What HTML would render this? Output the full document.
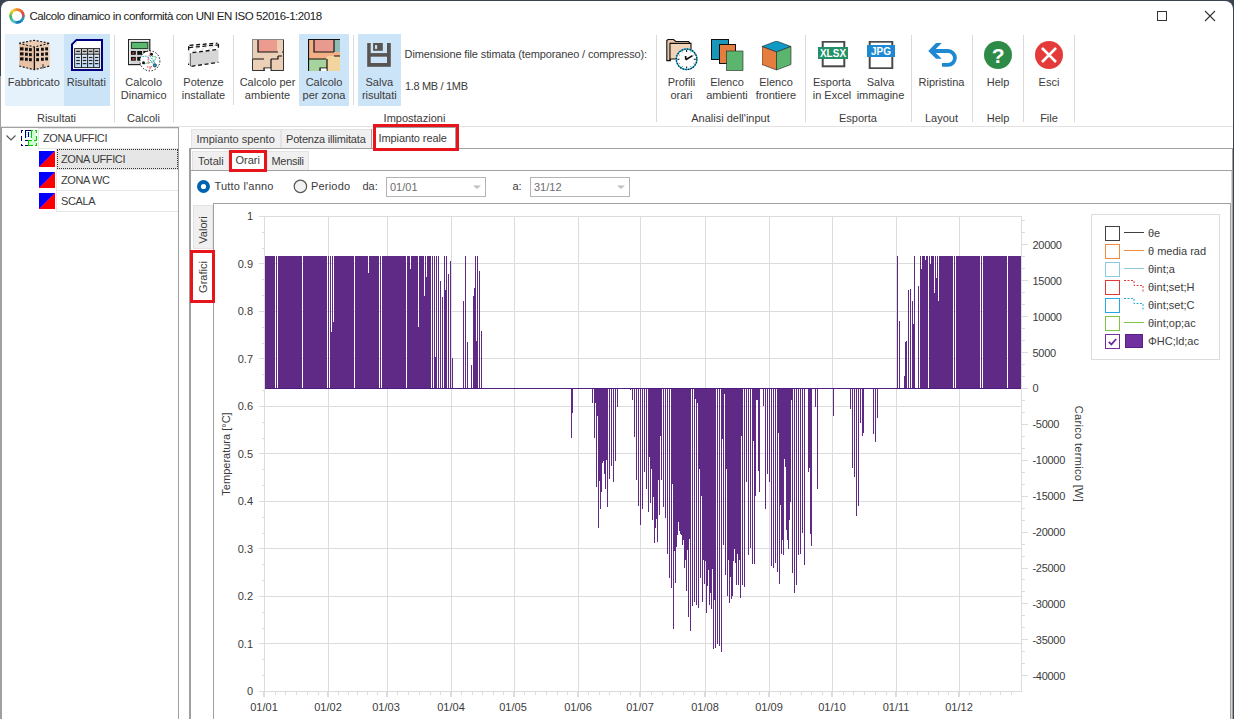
<!DOCTYPE html>
<html><head><meta charset="utf-8"><style>
html,body{margin:0;padding:0;width:1234px;height:719px;overflow:hidden;background:#3a4350;}
.a{position:absolute;}
.t{position:absolute;white-space:nowrap;line-height:1;font-family:"Liberation Sans", sans-serif;}
</style></head><body>
<div class="a" style="left:0px;top:0px;width:1234px;height:719px;background:#3a4350;"></div><div class="a" style="left:1px;top:1px;width:1232px;height:730px;background:#fff;border-radius:8px 8px 0 0;"></div><div class="a" style="left:0px;top:76px;width:1px;height:643px;background:#a0a0a0;"></div><div class="a" style="left:9px;top:8px;width:16px;height:16px;border-radius:50%;background:conic-gradient(from 0deg, #f08a2c 0deg, #e8453c 70deg, #1aa0c8 120deg, #0b6fb0 170deg, #5cc3d8 210deg, #3ab36b 260deg, #f5d22c 320deg, #f08a2c 360deg);-webkit-mask:radial-gradient(circle, transparent 4.5px, #000 5.5px);"></div><div class="t" style="left:29.5px;top:11px;font-size:11.5px;color:#1a1a1a;letter-spacing:-0.44px;">Calcolo dinamico in conformità con UNI EN ISO 52016-1:2018</div><div class="a" style="left:1157px;top:11px;width:10px;height:10px;box-sizing:border-box;border:1px solid #333;"></div><svg class="a" style="left:1204px;top:10px;" width="12" height="12" viewBox="0 0 12 12"><path d="M1 1L11 11M11 1L1 11" stroke="#333" stroke-width="1.1"/></svg><div class="a" style="left:5px;top:34px;width:59px;height:72px;background:#e5f1fb;"></div><div class="a" style="left:64px;top:34px;width:46px;height:72px;background:#cce4f7;"></div><div class="a" style="left:299px;top:34px;width:50px;height:72px;background:#cce4f7;"></div><div class="a" style="left:358px;top:34px;width:43px;height:72px;background:#cce4f7;"></div><div class="a" style="left:114px;top:35px;width:1px;height:87px;background:#dadada;"></div><div class="a" style="left:173px;top:35px;width:1px;height:87px;background:#dadada;"></div><div class="a" style="left:656px;top:35px;width:1px;height:87px;background:#dadada;"></div><div class="a" style="left:805px;top:35px;width:1px;height:87px;background:#dadada;"></div><div class="a" style="left:911px;top:35px;width:1px;height:87px;background:#dadada;"></div><div class="a" style="left:972px;top:35px;width:1px;height:87px;background:#dadada;"></div><div class="a" style="left:1023px;top:35px;width:1px;height:87px;background:#dadada;"></div><div class="a" style="left:1074px;top:35px;width:1px;height:87px;background:#dadada;"></div><div class="a" style="left:233px;top:35px;width:1px;height:70px;background:#dadada;"></div><div class="a" style="left:353px;top:35px;width:1px;height:70px;background:#dadada;"></div><div class="a" style="left:1px;top:126px;width:1232px;height:1px;background:#e3e3e3;"></div><div class="t" style="left:-26.200000000000003px;top:77px;width:120px;text-align:center;font-size:11px;color:#3b3b3b;">Fabbricato</div><div class="t" style="left:26.299999999999997px;top:77px;width:120px;text-align:center;font-size:11px;color:#3b3b3b;">Risultati</div><div class="t" style="left:83.69999999999999px;top:77px;width:120px;text-align:center;font-size:11px;color:#3b3b3b;">Calcolo</div><div class="t" style="left:83.69999999999999px;top:90px;width:120px;text-align:center;font-size:11px;color:#3b3b3b;">Dinamico</div><div class="t" style="left:143.5px;top:77px;width:120px;text-align:center;font-size:11px;color:#3b3b3b;">Potenze</div><div class="t" style="left:143.5px;top:90px;width:120px;text-align:center;font-size:11px;color:#3b3b3b;">installate</div><div class="t" style="left:207.5px;top:77px;width:120px;text-align:center;font-size:11px;color:#3b3b3b;">Calcolo per</div><div class="t" style="left:207.5px;top:90px;width:120px;text-align:center;font-size:11px;color:#3b3b3b;">ambiente</div><div class="t" style="left:264.0px;top:77px;width:120px;text-align:center;font-size:11px;color:#3b3b3b;">Calcolo</div><div class="t" style="left:264.0px;top:90px;width:120px;text-align:center;font-size:11px;color:#3b3b3b;">per zona</div><div class="t" style="left:319.3px;top:77px;width:120px;text-align:center;font-size:11px;color:#3b3b3b;">Salva</div><div class="t" style="left:319.3px;top:90px;width:120px;text-align:center;font-size:11px;color:#3b3b3b;">risultati</div><div class="t" style="left:404.6px;top:49px;font-size:11px;color:#3b3b3b;letter-spacing:-0.13px;">Dimensione file stimata (temporaneo / compresso):</div><div class="t" style="left:405px;top:81px;font-size:11px;color:#3b3b3b;letter-spacing:-0.33px;">1.8 MB / 1MB</div><div class="t" style="left:621.5px;top:77px;width:120px;text-align:center;font-size:11px;color:#3b3b3b;">Profili</div><div class="t" style="left:621.5px;top:90px;width:120px;text-align:center;font-size:11px;color:#3b3b3b;">orari</div><div class="t" style="left:667.0px;top:77px;width:120px;text-align:center;font-size:11px;color:#3b3b3b;">Elenco</div><div class="t" style="left:667.0px;top:90px;width:120px;text-align:center;font-size:11px;color:#3b3b3b;">ambienti</div><div class="t" style="left:716.0px;top:77px;width:120px;text-align:center;font-size:11px;color:#3b3b3b;">Elenco</div><div class="t" style="left:716.0px;top:90px;width:120px;text-align:center;font-size:11px;color:#3b3b3b;">frontiere</div><div class="t" style="left:772.0px;top:77px;width:120px;text-align:center;font-size:11px;color:#3b3b3b;">Esporta</div><div class="t" style="left:772.0px;top:90px;width:120px;text-align:center;font-size:11px;color:#3b3b3b;">in Excel</div><div class="t" style="left:820.5px;top:77px;width:120px;text-align:center;font-size:11px;color:#3b3b3b;">Salva</div><div class="t" style="left:820.5px;top:90px;width:120px;text-align:center;font-size:11px;color:#3b3b3b;">immagine</div><div class="t" style="left:881.5px;top:77px;width:120px;text-align:center;font-size:11px;color:#3b3b3b;">Ripristina</div><div class="t" style="left:938.0px;top:77px;width:120px;text-align:center;font-size:11px;color:#3b3b3b;">Help</div><div class="t" style="left:989.0px;top:77px;width:120px;text-align:center;font-size:11px;color:#3b3b3b;">Esci</div><div class="t" style="left:-23.5px;top:113px;width:160px;text-align:center;font-size:11px;color:#3b3b3b;">Risultati</div><div class="t" style="left:63.5px;top:113px;width:160px;text-align:center;font-size:11px;color:#3b3b3b;">Calcoli</div><div class="t" style="left:334.5px;top:113px;width:160px;text-align:center;font-size:11px;color:#3b3b3b;">Impostazioni</div><div class="t" style="left:650.5px;top:113px;width:160px;text-align:center;font-size:11px;color:#3b3b3b;">Analisi dell'input</div><div class="t" style="left:778.0px;top:113px;width:160px;text-align:center;font-size:11px;color:#3b3b3b;">Esporta</div><div class="t" style="left:861.5px;top:113px;width:160px;text-align:center;font-size:11px;color:#3b3b3b;">Layout</div><div class="t" style="left:918.0px;top:113px;width:160px;text-align:center;font-size:11px;color:#3b3b3b;">Help</div><div class="t" style="left:969.0px;top:113px;width:160px;text-align:center;font-size:11px;color:#3b3b3b;">File</div><svg class="a" style="left:19px;top:39px;" width="32" height="32" viewBox="0 0 32 32"><path d="M0 4.25L15 1.25L30.5 4.25L30.75 27L15.25 30.75L0.25 27Z" fill="#eccdb4"/><path d="M0 4.25L15.25 8L15.25 30.75L0.25 27Z" fill="#e6c1a5"/><path d="M0 4.25L15 1.25L30.5 4.25M0 4.25L15.25 8L30.5 4.25M0.25 27L15.25 30.75L30.75 27" fill="none" stroke="#111" stroke-width="1.1" stroke-dasharray="2 1.6"/><path d="M15.4 8L15.4 30.5" stroke="#111" stroke-width="1.3"/><rect x="1" y="8.3" width="3.5" height="3.1" fill="#111"/><rect x="1" y="13.3" width="3.5" height="3.1" fill="#111"/><rect x="1" y="18.3" width="3.5" height="3.1" fill="#111"/><rect x="6" y="8.700000000000001" width="2.8" height="3.1" fill="#111"/><rect x="6" y="13.700000000000001" width="2.8" height="3.1" fill="#111"/><rect x="6" y="18.7" width="2.8" height="3.1" fill="#111"/><rect x="10" y="9.100000000000001" width="2.8" height="3.1" fill="#111"/><rect x="10" y="14.100000000000001" width="2.8" height="3.1" fill="#111"/><rect x="10" y="19.1" width="2.8" height="3.1" fill="#111"/><rect x="17.2" y="9.100000000000001" width="2.8" height="3.1" fill="#111"/><rect x="17.2" y="14.100000000000001" width="2.8" height="3.1" fill="#111"/><rect x="17.2" y="19.1" width="2.8" height="3.1" fill="#111"/><rect x="22" y="8.700000000000001" width="2.8" height="3.1" fill="#111"/><rect x="22" y="13.700000000000001" width="2.8" height="3.1" fill="#111"/><rect x="22" y="18.700000000000003" width="2.8" height="3.1" fill="#111"/><rect x="26.2" y="8.3" width="2.8" height="3.1" fill="#111"/><rect x="26.2" y="13.3" width="2.8" height="3.1" fill="#111"/><rect x="26.2" y="18.3" width="2.8" height="3.1" fill="#111"/><rect x="23.5" y="25" width="1" height="4.5" fill="#333"/></svg><svg class="a" style="left:71px;top:39px;" width="32" height="32" viewBox="0 0 32 32"><defs><linearGradient id="rg" x1="0" y1="0" x2="0" y2="1"><stop offset="0" stop-color="#f4f9ff"/><stop offset="1" stop-color="#b8d8f8"/></linearGradient></defs><path d="M5.5 1H31V31H1V5.5Z" fill="#fff" stroke="#000080" stroke-width="2"/><path d="M2 5.8L5.8 2V5.8Z" fill="#e8e8e8"/><rect x="3.6" y="9.6" width="25" height="19" fill="url(#rg)" stroke="#222" stroke-width="1"/><rect x="4.1" y="10.1" width="24" height="4.8" fill="#c8c8c8"/><path d="M3.6 15.2H28.6M10.5 9.6V28.6M16.6 9.6V28.6M22.7 9.6V28.6" stroke="#222" stroke-width="1"/><rect x="5.25" y="11.8" width="3.6" height="1.2" fill="#222"/><rect x="5.25" y="17.9" width="3.6" height="1.2" fill="#222"/><rect x="5.25" y="20.9" width="3.6" height="1.2" fill="#222"/><rect x="5.25" y="24.0" width="3.6" height="1.2" fill="#222"/><rect x="11.75" y="11.8" width="3.6" height="1.2" fill="#222"/><rect x="11.75" y="17.9" width="3.6" height="1.2" fill="#222"/><rect x="11.75" y="20.9" width="3.6" height="1.2" fill="#222"/><rect x="11.75" y="24.0" width="3.6" height="1.2" fill="#222"/><rect x="17.85" y="11.8" width="3.6" height="1.2" fill="#222"/><rect x="17.85" y="17.9" width="3.6" height="1.2" fill="#222"/><rect x="17.85" y="20.9" width="3.6" height="1.2" fill="#222"/><rect x="17.85" y="24.0" width="3.6" height="1.2" fill="#222"/><rect x="23.85" y="11.8" width="3.6" height="1.2" fill="#222"/><rect x="23.85" y="17.9" width="3.6" height="1.2" fill="#222"/><rect x="23.85" y="20.9" width="3.6" height="1.2" fill="#222"/><rect x="23.85" y="24.0" width="3.6" height="1.2" fill="#222"/></svg><svg class="a" style="left:128px;top:39px;" width="33" height="33" viewBox="0 0 33 33"><rect x="0.6" y="0.4" width="21.2" height="25.2" fill="#d4d4d4" stroke="#222" stroke-width="1.2"/><path d="M1.6 25V1.4H21" fill="none" stroke="#f0f0f0" stroke-width="1"/><rect x="3.5" y="3.5" width="16.3" height="6" fill="#5cb870" stroke="#1d4d2a" stroke-width="1"/><rect x="3" y="12" width="4.8" height="3.8" fill="#111"/><rect x="9.2" y="12" width="4.8" height="3.8" fill="#111"/><rect x="15.3" y="12" width="4.8" height="3.8" fill="#111"/><rect x="3" y="17.9" width="4.8" height="3.8" fill="#111"/><rect x="9.2" y="17.9" width="4.8" height="3.8" fill="#111"/><rect x="4.6" y="13.3" width="1.6" height="1.4" fill="#f44"/><rect x="4.6" y="19.2" width="1.8" height="1.6" fill="#f44"/><rect x="17" y="13" width="1.6" height="1.4" fill="#f44"/><circle cx="21.9" cy="21.9" r="10" fill="#fff"/><circle cx="21.9" cy="21.9" r="10" fill="none" stroke="#111" stroke-width="1" stroke-dasharray="1.5 1.6"/><path d="M14.5 17.5L18.5 17L26 25.5L27 26.5M22 17L25 21L28 26" fill="none" stroke="#1aa0c8" stroke-width="1" stroke-dasharray="1.5 0.8"/><path d="M24 17.5L28.5 18L26 22.5L16 25L15.5 23.7" fill="none" stroke="#3ab36b" stroke-width="1" stroke-dasharray="1.5 0.8"/><path d="M22.5 13.5L20 19L20.5 25M23.5 27L21.5 30.5M19 28L24 28" fill="none" stroke="#ee4444" stroke-width="1" stroke-dasharray="1.5 0.8"/><circle cx="23.5" cy="15.3" r="1.5" fill="#111"/><circle cx="15.5" cy="23.7" r="1.5" fill="#111"/><circle cx="26.9" cy="26.4" r="1.6" fill="#1aa0c8" stroke="#111" stroke-width="0.6"/></svg><svg class="a" style="left:188px;top:42px;" width="32" height="26" viewBox="0 0 32 26"><path d="M0.3 4.5L2.3 11L2.3 24.3L0.3 22.3Z" fill="#ebebeb"/><path d="M2.3 11L30.5 7.4L30.5 20.3L2.3 24.3Z" fill="#d6d6d6"/><path d="M0.3 4.5L1.5 3.3L29.5 1.2L30.5 2.2L30.5 7.4L2.3 11Z" fill="#fff"/><path d="M4 10L12 4.5M12 9L20 3.5M20 8L28 2.5" stroke="#d0d0d0" stroke-width="0.8"/><path d="M1.5 3.3L29.5 1.2M1.2 5.6L30.4 2.8M4.5 10.6L30.5 7.4M3.5 24.3L30.5 20.3M30.4 1.8V7.8M0.6 4.2V9.5" fill="none" stroke="#111" stroke-width="1.3" stroke-dasharray="4 2.6"/><path d="M2.4 11.2V24.3" stroke="#444" stroke-width="0.8"/><circle cx="0.6" cy="22.3" r="0.7" fill="#111"/></svg><svg class="a" style="left:252px;top:39px;" width="32" height="32" viewBox="0 0 32 32"><rect x="0.5" y="0.5" width="31" height="31" fill="#ebcfb7" stroke="#888" stroke-width="1"/><rect x="6" y="1" width="19" height="12" fill="#eb9c8f"/><path d="M6 1L6 13L26 13M30 13L32 13M26 17L30 17M1 20L12 20M19 20L26 20L26 17M19 20L19 31M12 31L12 29L19 29" fill="none" stroke="#111" stroke-width="1.2"/><path d="M0.5 31.5L31.5 31.5M31.5 1L31.5 31.5M0.5 20L0.5 31.5" stroke="#333" stroke-width="1"/><rect x="13" y="29.5" width="5.5" height="2.5" fill="#fff"/></svg><svg class="a" style="left:308px;top:39px;" width="32" height="32" viewBox="0 0 32 32"><rect x="0" y="0" width="32" height="32" fill="#f2b084"/><rect x="6" y="1" width="19" height="12" fill="#e99a8e"/><rect x="26" y="1" width="6" height="12" fill="#8fbcb5"/><rect x="1" y="20" width="17" height="12" fill="#a6d39e"/><rect x="19" y="17" width="13" height="15" fill="#f2d59e"/><path d="M0.5 32L0.5 0.5L32 0.5M6 1L6 13L26 13M26 1L26 13M1 20L18 20M19 20L19 32M12 32L12 29L19 29M26 17L32 17" fill="none" stroke="#111" stroke-width="1.2"/><rect x="13" y="29.5" width="5.5" height="2.5" fill="#fff"/></svg><svg class="a" style="left:367px;top:43px;" width="24" height="24" viewBox="0 0 24 24"><rect x="0.2" y="0" width="23.6" height="23.8" fill="#575451"/><rect x="3.7" y="0" width="16.3" height="10.1" fill="#cce4f7"/><rect x="6.1" y="0" width="9.7" height="7.8" fill="#575451"/><rect x="8" y="2.1" width="2.1" height="3.8" fill="#cce4f7"/><rect x="3.7" y="13.7" width="16.3" height="6.3" fill="#cce4f7"/></svg><svg class="a" style="left:666px;top:39px;" width="32" height="32" viewBox="0 0 32 32"><path d="M0.8 21.6V1.5L2 0.5H7.5L9.8 2.5H22.5L23.5 3.5V8H4.4V21.6Z" fill="#e8c4a8" stroke="#111" stroke-width="1.1"/><path d="M4 21.6V4.4H25V20H4Z" fill="#f0d2b8" stroke="#111" stroke-width="1.1"/><circle cx="20.6" cy="20.3" r="10.3" fill="#fff" stroke="#1ab0d8" stroke-width="1.4"/><circle cx="20.6" cy="20.3" r="10.3" fill="none" stroke="#111" stroke-width="1.2" stroke-dasharray="1.2 1.5"/><path d="M20.60 13.10L20.60 11.00" stroke="#222" stroke-width="1.1"/><path d="M24.70 13.20L25.10 12.51" stroke="#222" stroke-width="0.9"/><path d="M27.70 16.20L28.39 15.80" stroke="#222" stroke-width="0.9"/><path d="M27.80 20.30L29.90 20.30" stroke="#222" stroke-width="1.1"/><path d="M27.70 24.40L28.39 24.80" stroke="#222" stroke-width="0.9"/><path d="M24.70 27.40L25.10 28.09" stroke="#222" stroke-width="0.9"/><path d="M20.60 27.50L20.60 29.60" stroke="#222" stroke-width="1.1"/><path d="M16.50 27.40L16.10 28.09" stroke="#222" stroke-width="0.9"/><path d="M13.50 24.40L12.81 24.80" stroke="#222" stroke-width="0.9"/><path d="M13.40 20.30L11.30 20.30" stroke="#222" stroke-width="1.1"/><path d="M13.50 16.20L12.81 15.80" stroke="#222" stroke-width="0.9"/><path d="M16.50 13.20L16.10 12.51" stroke="#222" stroke-width="0.9"/><path d="M19.8 20.8L26.5 16.6M19.8 20.8L19.6 17" stroke="#111" stroke-width="1.7"/></svg><svg class="a" style="left:711px;top:39px;" width="33" height="32" viewBox="0 0 33 32"><rect x="0.5" y="0.5" width="17" height="20" fill="#1a97b8" stroke="#111" stroke-width="1"/><rect x="8.5" y="5.5" width="16" height="19" fill="#e57d3f" stroke="#111" stroke-width="1"/><rect x="15.5" y="12" width="16.5" height="19.5" fill="#5bb56f" stroke="#222" stroke-width="0.6"/></svg><svg class="a" style="left:762px;top:41px;" width="30" height="30" viewBox="0 0 30 30"><path d="M14.5 0L29 5.5L14.5 11L0 5.5Z" fill="#0e9ac5" stroke="#222" stroke-width="0.6"/><path d="M0 5.5L14.5 11L14.5 29L0 23.5Z" fill="#e57d3f" stroke="#222" stroke-width="0.6"/><path d="M29 5.5L14.5 11L14.5 29L29 23.5Z" fill="#5bb56f" stroke="#222" stroke-width="0.6"/></svg><svg class="a" style="left:818px;top:41px;" width="30" height="27" viewBox="0 0 30 27"><rect x="4.7" y="0.7" width="21.6" height="24.6" fill="#fff" stroke="#4a4a4a" stroke-width="2"/><rect x="0" y="6" width="30" height="12" fill="#24906a"/><text x="15" y="16" text-anchor="middle" font-family="Liberation Sans" font-weight="bold" font-size="10" fill="#fff">XLSX</text></svg><svg class="a" style="left:867px;top:41px;" width="28" height="28" viewBox="0 0 28 28"><rect x="2.7" y="0.7" width="22.6" height="26.6" fill="#fff" stroke="#4a4a4a" stroke-width="2"/><rect x="0" y="4" width="28" height="12" fill="#1e88d2"/><text x="14" y="14" text-anchor="middle" font-family="Liberation Sans" font-weight="bold" font-size="10" fill="#fff">JPG</text></svg><svg class="a" style="left:928px;top:43px;" width="30" height="25" viewBox="0 0 30 25"><path d="M0.25 8L8 0L13.75 0L5.8 8L13.75 15.75L8 15.75Z" fill="#1e88d2"/><path d="M5 6.1H20A8.825 8.825 0 0 1 20 23.75H14V20H20A5.05 5.05 0 0 0 20 9.9H5Z" fill="#1e88d2"/></svg><svg class="a" style="left:983px;top:40px;" width="30" height="30" viewBox="0 0 30 30"><circle cx="15" cy="15" r="14" fill="#2e8b47"/><text x="15.2" y="23" text-anchor="middle" font-family="Liberation Sans" font-weight="bold" font-size="21" fill="#fff">?</text></svg><svg class="a" style="left:1034px;top:40px;" width="30" height="30" viewBox="0 0 30 30"><circle cx="15" cy="15" r="14" fill="#e53a3a"/><path d="M8 8L22 22M22 8L8 22" stroke="#fff" stroke-width="2.6"/></svg><div class="a" style="left:1px;top:127px;width:178px;height:600px;background:#fff;box-sizing:border-box;border:1px solid #a0a0a0;"></div><svg class="a" style="left:5px;top:134px;" width="12" height="9" viewBox="0 0 12 9"><path d="M1.5 1.5L6 6L10.5 1.5" fill="none" stroke="#555" stroke-width="1.2"/></svg><svg class="a" style="left:21px;top:130px;" width="16" height="16" viewBox="0 0 16 16"><g shape-rendering="crispEdges"><rect x="11" y="1" width="4" height="9" fill="#ccffcc"/><rect x="8" y="11" width="7" height="4" fill="#ccffcc"/><rect x="5" y="2" width="5" height="1" fill="#c0dcff"/><rect x="5" y="4" width="5" height="1" fill="#c0dcff"/><rect x="5" y="6" width="5" height="1" fill="#c0dcff"/><rect x="0" y="0" width="2" height="1" fill="#000066"/><rect x="0" y="0" width="1" height="3" fill="#000066"/><rect x="0" y="6" width="1" height="5" fill="#000066"/><rect x="0" y="14" width="1" height="2" fill="#000066"/><rect x="0" y="15" width="2" height="1" fill="#000066"/><rect x="4" y="15" width="3" height="1" fill="#000066"/><rect x="4" y="0" width="6" height="1" fill="#000066"/><rect x="4" y="0" width="1" height="8" fill="#000066"/><rect x="7" y="2" width="1" height="5" fill="#000066"/><rect x="4" y="10" width="3" height="1" fill="#000066"/><rect x="10" y="0" width="1" height="8" fill="#00cc00"/><rect x="10" y="0" width="2" height="1" fill="#00cc00"/><rect x="14" y="0" width="2" height="1" fill="#00cc00"/><rect x="15" y="0" width="1" height="3" fill="#00cc00"/><rect x="15" y="6" width="1" height="5" fill="#00cc00"/><rect x="15" y="13" width="1" height="3" fill="#00cc00"/><rect x="7" y="10" width="4" height="1" fill="#00cc00"/><rect x="13" y="10" width="3" height="1" fill="#00cc00"/><rect x="7" y="10" width="1" height="6" fill="#00cc00"/><rect x="7" y="15" width="5" height="1" fill="#00cc00"/><rect x="14" y="15" width="2" height="1" fill="#00cc00"/></g></svg><div class="a" style="left:38px;top:128px;width:140px;height:1px;background:#e6e6e6;"></div><div class="a" style="left:38px;top:128px;width:1px;height:20px;background:#e6e6e6;"></div><div class="a" style="left:38px;top:148px;width:140px;height:1px;background:#e6e6e6;"></div><div class="t" style="left:43px;top:133px;font-size:11px;color:#3b3b3b;letter-spacing:-0.4px;">ZONA UFFICI</div><svg class="a" style="left:39px;top:151px;" width="16" height="16" viewBox="0 0 16 16"><rect x="0" y="0" width="16" height="16" fill="#ff0000"/><path d="M0 0L16 0L0 16Z" fill="#0000ff"/><path d="M0 16L16 0" stroke="#c000c0" stroke-width="0.8"/></svg><div class="a" style="left:56px;top:149px;width:1px;height:21px;background:#e6e6e6;"></div><div class="a" style="left:56px;top:169px;width:122px;height:1px;background:#e6e6e6;"></div><div class="a" style="left:57px;top:149px;width:121px;height:20px;background:#e6e6e6;box-sizing:border-box;border:1px dotted #333;"></div><div class="t" style="left:61px;top:154px;font-size:11px;color:#3b3b3b;letter-spacing:-0.4px;">ZONA UFFICI</div><svg class="a" style="left:39px;top:172px;" width="16" height="16" viewBox="0 0 16 16"><rect x="0" y="0" width="16" height="16" fill="#ff0000"/><path d="M0 0L16 0L0 16Z" fill="#0000ff"/><path d="M0 16L16 0" stroke="#c000c0" stroke-width="0.8"/></svg><div class="a" style="left:56px;top:170px;width:1px;height:21px;background:#e6e6e6;"></div><div class="a" style="left:56px;top:190px;width:122px;height:1px;background:#e6e6e6;"></div><div class="t" style="left:61px;top:175px;font-size:11px;color:#3b3b3b;letter-spacing:-0.4px;">ZONA WC</div><svg class="a" style="left:39px;top:193px;" width="16" height="16" viewBox="0 0 16 16"><rect x="0" y="0" width="16" height="16" fill="#ff0000"/><path d="M0 0L16 0L0 16Z" fill="#0000ff"/><path d="M0 16L16 0" stroke="#c000c0" stroke-width="0.8"/></svg><div class="a" style="left:56px;top:191px;width:1px;height:21px;background:#e6e6e6;"></div><div class="a" style="left:56px;top:211px;width:122px;height:1px;background:#e6e6e6;"></div><div class="t" style="left:61px;top:196px;font-size:11px;color:#3b3b3b;letter-spacing:-0.4px;">SCALA</div><div class="a" style="left:371px;top:148px;width:862px;height:1px;background:#a0a0a0;"></div><div class="a" style="left:191px;top:129px;width:90px;height:20px;background:#f0f0f0;box-sizing:border-box;border:1px solid #e3e3e3;"></div><div class="t" style="left:196.5px;top:134px;font-size:11px;color:#3b3b3b;letter-spacing:0px;">Impianto spento</div><div class="a" style="left:281px;top:129px;width:91px;height:20px;background:#f0f0f0;box-sizing:border-box;border:1px solid #e3e3e3;"></div><div class="t" style="left:286px;top:134px;font-size:11px;color:#3b3b3b;letter-spacing:-0.2px;">Potenza illimitata</div><div class="a" style="left:372px;top:127px;width:86px;height:23px;background:#fff;"></div><div class="a" style="left:375px;top:127px;width:81px;height:23px;box-sizing:border-box;border:1px solid #a0a0a0;border-bottom:none;"></div><div class="a" style="left:371px;top:129px;width:1px;height:20px;background:#a0a0a0;"></div><div class="t" style="left:378.5px;top:133px;font-size:11px;color:#3b3b3b;letter-spacing:-0.1px;">Impianto reale</div><div class="a" style="left:189px;top:148px;width:1044px;height:600px;background:#fff;box-sizing:border-box;border:1px solid #a0a0a0;"></div><div class="a" style="left:189px;top:148px;width:2px;height:600px;background:#a0a0a0;"></div><div class="a" style="left:192px;top:151px;width:37px;height:20px;background:#f0f0f0;box-sizing:border-box;border:1px solid #e3e3e3;"></div><div class="t" style="left:198px;top:156px;font-size:11px;color:#3b3b3b;">Totali</div><div class="a" style="left:267px;top:151px;width:42px;height:20px;background:#f0f0f0;box-sizing:border-box;border:1px solid #e3e3e3;"></div><div class="t" style="left:271.5px;top:156px;font-size:11px;color:#3b3b3b;letter-spacing:-0.3px;">Mensili</div><div class="a" style="left:190px;top:170px;width:1042px;height:1px;background:#a0a0a0;"></div><div class="a" style="left:229px;top:150px;width:38px;height:21px;background:#fff;"></div><div class="t" style="left:235.5px;top:155px;font-size:11px;color:#3b3b3b;">Orari</div><svg class="a" style="left:196px;top:179px;" width="15" height="15" viewBox="0 0 15 15"><circle cx="7.5" cy="7.5" r="6.5" fill="#0063b1"/><circle cx="7.5" cy="7.5" r="2.6" fill="#fff"/></svg><div class="t" style="left:214.5px;top:181px;font-size:11px;color:#3b3b3b;letter-spacing:0.2px;">Tutto l'anno</div><svg class="a" style="left:293px;top:179px;" width="15" height="15" viewBox="0 0 15 15"><circle cx="7.4" cy="7.4" r="6.2" fill="#f2f2f2" stroke="#555" stroke-width="1.2"/></svg><div class="t" style="left:311px;top:181px;font-size:11px;color:#3b3b3b;letter-spacing:0.2px;">Periodo</div><div class="t" style="left:362.5px;top:181px;font-size:11px;color:#3b3b3b;">da:</div><div class="a" style="left:386px;top:177px;width:100px;height:20px;background:#fff;box-sizing:border-box;border:1px solid #b4b4b4;"></div><div class="t" style="left:390px;top:182px;font-size:11px;color:#6d6d6d;">01/01</div><svg class="a" style="left:472px;top:184px;" width="10" height="6" viewBox="0 0 10 6"><path d="M1 1.5L5 5L9 1.5Z" fill="#c0c0c0"/></svg><div class="t" style="left:512.5px;top:181px;font-size:11px;color:#3b3b3b;">a:</div><div class="a" style="left:530px;top:177px;width:100px;height:20px;background:#fff;box-sizing:border-box;border:1px solid #b4b4b4;"></div><div class="t" style="left:534px;top:182px;font-size:11px;color:#6d6d6d;">31/12</div><svg class="a" style="left:616px;top:184px;" width="10" height="6" viewBox="0 0 10 6"><path d="M1 1.5L5 5L9 1.5Z" fill="#c0c0c0"/></svg><div class="a" style="left:213px;top:203px;width:1018px;height:1px;background:#a0a0a0;"></div><div class="a" style="left:213px;top:203px;width:1px;height:520px;background:#a0a0a0;"></div><div class="a" style="left:1230px;top:203px;width:1px;height:520px;background:#a0a0a0;"></div><div class="a" style="left:1231px;top:171px;width:1px;height:560px;background:#d4d4d4;"></div><div class="a" style="left:193px;top:205px;width:20px;height:44px;background:#f0f0f0;box-sizing:border-box;border:1px solid #e3e3e3;"></div><div class="t" style="left:203px;top:229.5px;font-size:11px;color:#3b3b3b;transform:translate(-50%,-50%) rotate(-90deg);">Valori</div><div class="a" style="left:191px;top:251px;width:23px;height:51px;background:#fff;"></div><div class="t" style="left:202.5px;top:276.5px;font-size:11px;color:#3b3b3b;transform:translate(-50%,-50%) rotate(-90deg);">Grafici</div><svg class="a" style="left:0px;top:0px;" width="1234" height="719" viewBox="0 0 1234 719"><rect x="259" y="691" width="762" height="1" fill="#dcdcdc"/><rect x="259" y="643" width="762" height="1" fill="#dcdcdc"/><rect x="259" y="596" width="762" height="1" fill="#dcdcdc"/><rect x="259" y="548" width="762" height="1" fill="#dcdcdc"/><rect x="259" y="501" width="762" height="1" fill="#dcdcdc"/><rect x="259" y="453" width="762" height="1" fill="#dcdcdc"/><rect x="259" y="406" width="762" height="1" fill="#dcdcdc"/><rect x="259" y="358" width="762" height="1" fill="#dcdcdc"/><rect x="259" y="311" width="762" height="1" fill="#dcdcdc"/><rect x="259" y="263" width="762" height="1" fill="#dcdcdc"/><rect x="259" y="216" width="762" height="1" fill="#dcdcdc"/><rect x="264" y="216" width="1" height="476" fill="#dcdcdc"/><rect x="328" y="216" width="1" height="476" fill="#dcdcdc"/><rect x="387" y="216" width="1" height="476" fill="#dcdcdc"/><rect x="451" y="216" width="1" height="476" fill="#dcdcdc"/><rect x="514" y="216" width="1" height="476" fill="#dcdcdc"/><rect x="578" y="216" width="1" height="476" fill="#dcdcdc"/><rect x="640" y="216" width="1" height="476" fill="#dcdcdc"/><rect x="705" y="216" width="1" height="476" fill="#dcdcdc"/><rect x="769" y="216" width="1" height="476" fill="#dcdcdc"/><rect x="832" y="216" width="1" height="476" fill="#dcdcdc"/><rect x="896" y="216" width="1" height="476" fill="#dcdcdc"/><rect x="959" y="216" width="1" height="476" fill="#dcdcdc"/><rect x="1021" y="216" width="1" height="476" fill="#dcdcdc"/><rect x="262" y="675" width="2" height="1" fill="#dcdcdc"/><rect x="262" y="659" width="2" height="1" fill="#dcdcdc"/><rect x="262" y="628" width="2" height="1" fill="#dcdcdc"/><rect x="262" y="612" width="2" height="1" fill="#dcdcdc"/><rect x="262" y="580" width="2" height="1" fill="#dcdcdc"/><rect x="262" y="564" width="2" height="1" fill="#dcdcdc"/><rect x="262" y="533" width="2" height="1" fill="#dcdcdc"/><rect x="262" y="517" width="2" height="1" fill="#dcdcdc"/><rect x="262" y="485" width="2" height="1" fill="#dcdcdc"/><rect x="262" y="469" width="2" height="1" fill="#dcdcdc"/><rect x="262" y="438" width="2" height="1" fill="#dcdcdc"/><rect x="262" y="422" width="2" height="1" fill="#dcdcdc"/><rect x="262" y="390" width="2" height="1" fill="#dcdcdc"/><rect x="262" y="374" width="2" height="1" fill="#dcdcdc"/><rect x="262" y="343" width="2" height="1" fill="#dcdcdc"/><rect x="262" y="327" width="2" height="1" fill="#dcdcdc"/><rect x="262" y="295" width="2" height="1" fill="#dcdcdc"/><rect x="262" y="279" width="2" height="1" fill="#dcdcdc"/><rect x="262" y="248" width="2" height="1" fill="#dcdcdc"/><rect x="262" y="232" width="2" height="1" fill="#dcdcdc"/><rect x="263" y="692" width="2" height="5" fill="#dcdcdc"/><rect x="275" y="692" width="1" height="3" fill="#dcdcdc"/><rect x="285" y="692" width="1" height="3" fill="#dcdcdc"/><rect x="296" y="692" width="1" height="3" fill="#dcdcdc"/><rect x="307" y="692" width="1" height="3" fill="#dcdcdc"/><rect x="318" y="692" width="1" height="3" fill="#dcdcdc"/><rect x="327" y="692" width="2" height="5" fill="#dcdcdc"/><rect x="338" y="692" width="1" height="3" fill="#dcdcdc"/><rect x="348" y="692" width="1" height="3" fill="#dcdcdc"/><rect x="357" y="692" width="1" height="3" fill="#dcdcdc"/><rect x="367" y="692" width="1" height="3" fill="#dcdcdc"/><rect x="377" y="692" width="1" height="3" fill="#dcdcdc"/><rect x="386" y="692" width="2" height="5" fill="#dcdcdc"/><rect x="397" y="692" width="1" height="3" fill="#dcdcdc"/><rect x="408" y="692" width="1" height="3" fill="#dcdcdc"/><rect x="419" y="692" width="1" height="3" fill="#dcdcdc"/><rect x="430" y="692" width="1" height="3" fill="#dcdcdc"/><rect x="440" y="692" width="1" height="3" fill="#dcdcdc"/><rect x="450" y="692" width="2" height="5" fill="#dcdcdc"/><rect x="461" y="692" width="1" height="3" fill="#dcdcdc"/><rect x="472" y="692" width="1" height="3" fill="#dcdcdc"/><rect x="482" y="692" width="1" height="3" fill="#dcdcdc"/><rect x="493" y="692" width="1" height="3" fill="#dcdcdc"/><rect x="503" y="692" width="1" height="3" fill="#dcdcdc"/><rect x="513" y="692" width="2" height="5" fill="#dcdcdc"/><rect x="524" y="692" width="1" height="3" fill="#dcdcdc"/><rect x="535" y="692" width="1" height="3" fill="#dcdcdc"/><rect x="546" y="692" width="1" height="3" fill="#dcdcdc"/><rect x="557" y="692" width="1" height="3" fill="#dcdcdc"/><rect x="567" y="692" width="1" height="3" fill="#dcdcdc"/><rect x="577" y="692" width="2" height="5" fill="#dcdcdc"/><rect x="588" y="692" width="1" height="3" fill="#dcdcdc"/><rect x="599" y="692" width="1" height="3" fill="#dcdcdc"/><rect x="609" y="692" width="1" height="3" fill="#dcdcdc"/><rect x="620" y="692" width="1" height="3" fill="#dcdcdc"/><rect x="630" y="692" width="1" height="3" fill="#dcdcdc"/><rect x="639" y="692" width="2" height="5" fill="#dcdcdc"/><rect x="651" y="692" width="1" height="3" fill="#dcdcdc"/><rect x="662" y="692" width="1" height="3" fill="#dcdcdc"/><rect x="673" y="692" width="1" height="3" fill="#dcdcdc"/><rect x="683" y="692" width="1" height="3" fill="#dcdcdc"/><rect x="694" y="692" width="1" height="3" fill="#dcdcdc"/><rect x="704" y="692" width="2" height="5" fill="#dcdcdc"/><rect x="716" y="692" width="1" height="3" fill="#dcdcdc"/><rect x="726" y="692" width="1" height="3" fill="#dcdcdc"/><rect x="737" y="692" width="1" height="3" fill="#dcdcdc"/><rect x="748" y="692" width="1" height="3" fill="#dcdcdc"/><rect x="759" y="692" width="1" height="3" fill="#dcdcdc"/><rect x="768" y="692" width="2" height="5" fill="#dcdcdc"/><rect x="780" y="692" width="1" height="3" fill="#dcdcdc"/><rect x="790" y="692" width="1" height="3" fill="#dcdcdc"/><rect x="801" y="692" width="1" height="3" fill="#dcdcdc"/><rect x="811" y="692" width="1" height="3" fill="#dcdcdc"/><rect x="822" y="692" width="1" height="3" fill="#dcdcdc"/><rect x="831" y="692" width="2" height="5" fill="#dcdcdc"/><rect x="843" y="692" width="1" height="3" fill="#dcdcdc"/><rect x="853" y="692" width="1" height="3" fill="#dcdcdc"/><rect x="864" y="692" width="1" height="3" fill="#dcdcdc"/><rect x="875" y="692" width="1" height="3" fill="#dcdcdc"/><rect x="886" y="692" width="1" height="3" fill="#dcdcdc"/><rect x="895" y="692" width="2" height="5" fill="#dcdcdc"/><rect x="907" y="692" width="1" height="3" fill="#dcdcdc"/><rect x="917" y="692" width="1" height="3" fill="#dcdcdc"/><rect x="928" y="692" width="1" height="3" fill="#dcdcdc"/><rect x="938" y="692" width="1" height="3" fill="#dcdcdc"/><rect x="948" y="692" width="1" height="3" fill="#dcdcdc"/><rect x="958" y="692" width="2" height="5" fill="#dcdcdc"/><rect x="969" y="692" width="1" height="3" fill="#dcdcdc"/><rect x="980" y="692" width="1" height="3" fill="#dcdcdc"/><rect x="990" y="692" width="1" height="3" fill="#dcdcdc"/><rect x="1000" y="692" width="1" height="3" fill="#dcdcdc"/><rect x="1011" y="692" width="1" height="3" fill="#dcdcdc"/><rect x="1022" y="675" width="6" height="1" fill="#dcdcdc"/><rect x="1022" y="663" width="3" height="1" fill="#dcdcdc"/><rect x="1022" y="651" width="3" height="1" fill="#dcdcdc"/><rect x="1022" y="639" width="6" height="1" fill="#dcdcdc"/><rect x="1022" y="627" width="3" height="1" fill="#dcdcdc"/><rect x="1022" y="615" width="3" height="1" fill="#dcdcdc"/><rect x="1022" y="603" width="6" height="1" fill="#dcdcdc"/><rect x="1022" y="591" width="3" height="1" fill="#dcdcdc"/><rect x="1022" y="579" width="3" height="1" fill="#dcdcdc"/><rect x="1022" y="568" width="6" height="1" fill="#dcdcdc"/><rect x="1022" y="556" width="3" height="1" fill="#dcdcdc"/><rect x="1022" y="544" width="3" height="1" fill="#dcdcdc"/><rect x="1022" y="532" width="6" height="1" fill="#dcdcdc"/><rect x="1022" y="520" width="3" height="1" fill="#dcdcdc"/><rect x="1022" y="508" width="3" height="1" fill="#dcdcdc"/><rect x="1022" y="496" width="6" height="1" fill="#dcdcdc"/><rect x="1022" y="484" width="3" height="1" fill="#dcdcdc"/><rect x="1022" y="472" width="3" height="1" fill="#dcdcdc"/><rect x="1022" y="460" width="6" height="1" fill="#dcdcdc"/><rect x="1022" y="448" width="3" height="1" fill="#dcdcdc"/><rect x="1022" y="436" width="3" height="1" fill="#dcdcdc"/><rect x="1022" y="424" width="6" height="1" fill="#dcdcdc"/><rect x="1022" y="412" width="3" height="1" fill="#dcdcdc"/><rect x="1022" y="400" width="3" height="1" fill="#dcdcdc"/><rect x="1022" y="388" width="6" height="1" fill="#dcdcdc"/><rect x="1022" y="376" width="3" height="1" fill="#dcdcdc"/><rect x="1022" y="364" width="3" height="1" fill="#dcdcdc"/><rect x="1022" y="352" width="6" height="1" fill="#dcdcdc"/><rect x="1022" y="340" width="3" height="1" fill="#dcdcdc"/><rect x="1022" y="328" width="3" height="1" fill="#dcdcdc"/><rect x="1022" y="316" width="6" height="1" fill="#dcdcdc"/><rect x="1022" y="304" width="3" height="1" fill="#dcdcdc"/><rect x="1022" y="292" width="3" height="1" fill="#dcdcdc"/><rect x="1022" y="280" width="6" height="1" fill="#dcdcdc"/><rect x="1022" y="268" width="3" height="1" fill="#dcdcdc"/><rect x="1022" y="256" width="3" height="1" fill="#dcdcdc"/><rect x="1022" y="244" width="6" height="1" fill="#dcdcdc"/><rect x="1022" y="232" width="3" height="1" fill="#dcdcdc"/><rect x="1022" y="220" width="3" height="1" fill="#dcdcdc"/><g shape-rendering="crispEdges"><rect x="265" y="256.0" width="10" height="133.0" fill="#5e2a86"/><rect x="276" y="256.0" width="1" height="133.0" fill="#5e2a86"/><rect x="278" y="256.0" width="24" height="133.0" fill="#5e2a86"/><rect x="303" y="256.0" width="24" height="133.0" fill="#5e2a86"/><rect x="328" y="256.0" width="1" height="133.0" fill="#5e2a86"/><rect x="330" y="256.0" width="1" height="133.0" fill="#5e2a86"/><rect x="331" y="332.0" width="1" height="57.0" fill="#5e2a86"/><rect x="332" y="256.0" width="1" height="133.0" fill="#5e2a86"/><rect x="333" y="322.0" width="1" height="67.0" fill="#5e2a86"/><rect x="334" y="256.0" width="20" height="133.0" fill="#5e2a86"/><rect x="355" y="256.0" width="13" height="133.0" fill="#5e2a86"/><rect x="368" y="273.0" width="1" height="116.0" fill="#5e2a86"/><rect x="369" y="256.0" width="10" height="133.0" fill="#5e2a86"/><rect x="380" y="256.0" width="1" height="133.0" fill="#5e2a86"/><rect x="382" y="256.0" width="24" height="133.0" fill="#5e2a86"/><rect x="407" y="256.0" width="3" height="133.0" fill="#5e2a86"/><rect x="410" y="269.0" width="1" height="120.0" fill="#5e2a86"/><rect x="411" y="256.0" width="7" height="133.0" fill="#5e2a86"/><rect x="418" y="327.0" width="1" height="62.0" fill="#5e2a86"/><rect x="419" y="256.0" width="5" height="133.0" fill="#5e2a86"/><rect x="424" y="296.0" width="1" height="93.0" fill="#5e2a86"/><rect x="425" y="256.0" width="1" height="133.0" fill="#5e2a86"/><rect x="426" y="277.0" width="1" height="112.0" fill="#5e2a86"/><rect x="427" y="256.0" width="4" height="133.0" fill="#5e2a86"/><rect x="432" y="256.0" width="1" height="133.0" fill="#5e2a86"/><rect x="434" y="256.0" width="1" height="133.0" fill="#5e2a86"/><rect x="435" y="357.0" width="1" height="32.0" fill="#5e2a86"/><rect x="436" y="256.0" width="1" height="133.0" fill="#5e2a86"/><rect x="438" y="256.0" width="1" height="133.0" fill="#5e2a86"/><rect x="440" y="281.0" width="1" height="108.0" fill="#5e2a86"/><rect x="442" y="297.0" width="1" height="92.0" fill="#5e2a86"/><rect x="444" y="256.0" width="1" height="133.0" fill="#5e2a86"/><rect x="445" y="290.0" width="1" height="99.0" fill="#5e2a86"/><rect x="446" y="256.0" width="1" height="133.0" fill="#5e2a86"/><rect x="448" y="274.0" width="1" height="115.0" fill="#5e2a86"/><rect x="450" y="261.0" width="1" height="128.0" fill="#5e2a86"/><rect x="452" y="358.0" width="1" height="31.0" fill="#5e2a86"/><rect x="463" y="301.0" width="1" height="88.0" fill="#5e2a86"/><rect x="465" y="256.0" width="1" height="133.0" fill="#5e2a86"/><rect x="467" y="342.0" width="1" height="47.0" fill="#5e2a86"/><rect x="471" y="365.0" width="1" height="24.0" fill="#5e2a86"/><rect x="473" y="296.0" width="1" height="93.0" fill="#5e2a86"/><rect x="474" y="288.0" width="1" height="101.0" fill="#5e2a86"/><rect x="475" y="256.0" width="1" height="133.0" fill="#5e2a86"/><rect x="476" y="341.0" width="1" height="48.0" fill="#5e2a86"/><rect x="477" y="256.0" width="1" height="133.0" fill="#5e2a86"/><rect x="479" y="271.0" width="1" height="118.0" fill="#5e2a86"/><rect x="481" y="331.0" width="1" height="58.0" fill="#5e2a86"/><rect x="897" y="256.0" width="1" height="133.0" fill="#5e2a86"/><rect x="899" y="321.0" width="1" height="68.0" fill="#5e2a86"/><rect x="904" y="376.0" width="1" height="13.0" fill="#5e2a86"/><rect x="905" y="342.0" width="1" height="47.0" fill="#5e2a86"/><rect x="906" y="341.0" width="1" height="48.0" fill="#5e2a86"/><rect x="908" y="290.0" width="1" height="99.0" fill="#5e2a86"/><rect x="910" y="289.0" width="1" height="100.0" fill="#5e2a86"/><rect x="912" y="301.0" width="1" height="88.0" fill="#5e2a86"/><rect x="913" y="323.5" width="1" height="65.5" fill="#5e2a86"/><rect x="914" y="256.0" width="1" height="133.0" fill="#5e2a86"/><rect x="918" y="286.0" width="1" height="103.0" fill="#5e2a86"/><rect x="920" y="256.0" width="1" height="133.0" fill="#5e2a86"/><rect x="921" y="269.0" width="1" height="120.0" fill="#5e2a86"/><rect x="922" y="256.0" width="3" height="133.0" fill="#5e2a86"/><rect x="925" y="260.0" width="1" height="129.0" fill="#5e2a86"/><rect x="926" y="256.0" width="2" height="133.0" fill="#5e2a86"/><rect x="929" y="256.0" width="1" height="133.0" fill="#5e2a86"/><rect x="930" y="264.0" width="1" height="125.0" fill="#5e2a86"/><rect x="931" y="256.0" width="3" height="133.0" fill="#5e2a86"/><rect x="934" y="293.0" width="1" height="96.0" fill="#5e2a86"/><rect x="935" y="256.0" width="1" height="133.0" fill="#5e2a86"/><rect x="936" y="278.0" width="1" height="111.0" fill="#5e2a86"/><rect x="937" y="256.0" width="1" height="133.0" fill="#5e2a86"/><rect x="938" y="300.6" width="1" height="88.4" fill="#5e2a86"/><rect x="939" y="256.0" width="14" height="133.0" fill="#5e2a86"/><rect x="954" y="256.0" width="1" height="133.0" fill="#5e2a86"/><rect x="956" y="256.0" width="24" height="133.0" fill="#5e2a86"/><rect x="981" y="256.0" width="1" height="133.0" fill="#5e2a86"/><rect x="983" y="256.0" width="24" height="133.0" fill="#5e2a86"/><rect x="1008" y="256.0" width="13" height="133.0" fill="#5e2a86"/><rect x="571" y="388" width="1" height="49.6" fill="#5e2a86"/><rect x="572" y="388" width="1" height="24.8" fill="#5e2a86"/><rect x="592" y="388" width="1" height="15.0" fill="#5e2a86"/><rect x="594" y="388" width="1" height="49.6" fill="#5e2a86"/><rect x="595" y="388" width="1" height="15.0" fill="#5e2a86"/><rect x="596" y="388" width="1" height="98.6" fill="#5e2a86"/><rect x="597" y="388" width="1" height="27.6" fill="#5e2a86"/><rect x="598" y="388" width="1" height="139.8" fill="#5e2a86"/><rect x="599" y="388" width="1" height="93.3" fill="#5e2a86"/><rect x="600" y="388" width="1" height="120.5" fill="#5e2a86"/><rect x="601" y="388" width="1" height="103.5" fill="#5e2a86"/><rect x="602" y="388" width="1" height="74.8" fill="#5e2a86"/><rect x="603" y="388" width="1" height="73.3" fill="#5e2a86"/><rect x="604" y="388" width="1" height="85.5" fill="#5e2a86"/><rect x="605" y="388" width="1" height="100.6" fill="#5e2a86"/><rect x="606" y="388" width="1" height="71.8" fill="#5e2a86"/><rect x="607" y="388" width="1" height="118.6" fill="#5e2a86"/><rect x="609" y="388" width="1" height="90.8" fill="#5e2a86"/><rect x="611" y="388" width="1" height="77.7" fill="#5e2a86"/><rect x="613" y="388" width="1" height="93.8" fill="#5e2a86"/><rect x="615" y="388" width="1" height="72.8" fill="#5e2a86"/><rect x="617" y="388" width="1" height="18.9" fill="#5e2a86"/><rect x="630" y="388" width="1" height="2.0" fill="#5e2a86"/><rect x="632" y="388" width="1" height="12.0" fill="#5e2a86"/><rect x="634" y="388" width="1" height="49.0" fill="#5e2a86"/><rect x="636" y="388" width="1" height="91.8" fill="#5e2a86"/><rect x="638" y="388" width="1" height="117.6" fill="#5e2a86"/><rect x="640" y="388" width="1" height="136.8" fill="#5e2a86"/><rect x="642" y="388" width="1" height="120.5" fill="#5e2a86"/><rect x="644" y="388" width="1" height="83.5" fill="#5e2a86"/><rect x="646" y="388" width="1" height="100.6" fill="#5e2a86"/><rect x="648" y="388" width="1" height="124.4" fill="#5e2a86"/><rect x="649" y="388" width="1" height="69.0" fill="#5e2a86"/><rect x="650" y="388" width="1" height="114.7" fill="#5e2a86"/><rect x="651" y="388" width="1" height="81.0" fill="#5e2a86"/><rect x="652" y="388" width="1" height="131.7" fill="#5e2a86"/><rect x="653" y="388" width="1" height="109.0" fill="#5e2a86"/><rect x="654" y="388" width="1" height="155.4" fill="#5e2a86"/><rect x="655" y="388" width="1" height="140.0" fill="#5e2a86"/><rect x="656" y="388" width="1" height="130.8" fill="#5e2a86"/><rect x="657" y="388" width="1" height="154.0" fill="#5e2a86"/><rect x="658" y="388" width="1" height="92.0" fill="#5e2a86"/><rect x="659" y="388" width="1" height="126.9" fill="#5e2a86"/><rect x="660" y="388" width="1" height="48.0" fill="#5e2a86"/><rect x="661" y="388" width="1" height="91.8" fill="#5e2a86"/><rect x="663" y="388" width="1" height="118.6" fill="#5e2a86"/><rect x="665" y="388" width="1" height="129.8" fill="#5e2a86"/><rect x="667" y="388" width="1" height="166.0" fill="#5e2a86"/><rect x="669" y="388" width="1" height="190.4" fill="#5e2a86"/><rect x="671" y="388" width="1" height="200.0" fill="#5e2a86"/><rect x="672" y="388" width="1" height="96.2" fill="#5e2a86"/><rect x="673" y="388" width="1" height="240.5" fill="#5e2a86"/><rect x="674" y="388" width="1" height="163.0" fill="#5e2a86"/><rect x="675" y="388" width="1" height="195.3" fill="#5e2a86"/><rect x="676" y="388" width="1" height="159.0" fill="#5e2a86"/><rect x="677" y="388" width="1" height="146.6" fill="#5e2a86"/><rect x="678" y="388" width="1" height="134.0" fill="#5e2a86"/><rect x="679" y="388" width="1" height="142.7" fill="#5e2a86"/><rect x="680" y="388" width="1" height="145.6" fill="#5e2a86"/><rect x="681" y="388" width="1" height="146.6" fill="#5e2a86"/><rect x="682" y="388" width="1" height="157.0" fill="#5e2a86"/><rect x="683" y="388" width="1" height="152.0" fill="#5e2a86"/><rect x="684" y="388" width="1" height="179.7" fill="#5e2a86"/><rect x="685" y="388" width="1" height="172.0" fill="#5e2a86"/><rect x="686" y="388" width="1" height="203.0" fill="#5e2a86"/><rect x="687" y="388" width="1" height="162.0" fill="#5e2a86"/><rect x="688" y="388" width="1" height="229.4" fill="#5e2a86"/><rect x="689" y="388" width="1" height="150.5" fill="#5e2a86"/><rect x="690" y="388" width="1" height="243.0" fill="#5e2a86"/><rect x="692" y="388" width="1" height="217.7" fill="#5e2a86"/><rect x="694" y="388" width="1" height="213.8" fill="#5e2a86"/><rect x="695" y="388" width="1" height="11.0" fill="#5e2a86"/><rect x="696" y="388" width="1" height="216.7" fill="#5e2a86"/><rect x="697" y="388" width="1" height="15.0" fill="#5e2a86"/><rect x="698" y="388" width="1" height="219.6" fill="#5e2a86"/><rect x="699" y="388" width="1" height="81.0" fill="#5e2a86"/><rect x="700" y="388" width="1" height="190.4" fill="#5e2a86"/><rect x="701" y="388" width="1" height="108.0" fill="#5e2a86"/><rect x="702" y="388" width="1" height="213.8" fill="#5e2a86"/><rect x="703" y="388" width="1" height="172.0" fill="#5e2a86"/><rect x="704" y="388" width="1" height="196.3" fill="#5e2a86"/><rect x="705" y="388" width="1" height="173.0" fill="#5e2a86"/><rect x="706" y="388" width="1" height="224.5" fill="#5e2a86"/><rect x="707" y="388" width="1" height="198.0" fill="#5e2a86"/><rect x="708" y="388" width="1" height="182.0" fill="#5e2a86"/><rect x="709" y="388" width="1" height="216.7" fill="#5e2a86"/><rect x="710" y="388" width="1" height="205.0" fill="#5e2a86"/><rect x="711" y="388" width="1" height="220.6" fill="#5e2a86"/><rect x="712" y="388" width="1" height="180.7" fill="#5e2a86"/><rect x="713" y="388" width="1" height="260.6" fill="#5e2a86"/><rect x="714" y="388" width="1" height="212.0" fill="#5e2a86"/><rect x="715" y="388" width="1" height="259.6" fill="#5e2a86"/><rect x="717" y="388" width="1" height="255.7" fill="#5e2a86"/><rect x="719" y="388" width="1" height="257.6" fill="#5e2a86"/><rect x="721" y="388" width="1" height="263.5" fill="#5e2a86"/><rect x="722" y="388" width="1" height="51.0" fill="#5e2a86"/><rect x="723" y="388" width="1" height="157.3" fill="#5e2a86"/><rect x="724" y="388" width="1" height="6.0" fill="#5e2a86"/><rect x="725" y="388" width="1" height="186.5" fill="#5e2a86"/><rect x="726" y="388" width="1" height="81.0" fill="#5e2a86"/><rect x="727" y="388" width="1" height="208.0" fill="#5e2a86"/><rect x="728" y="388" width="1" height="172.0" fill="#5e2a86"/><rect x="729" y="388" width="1" height="214.8" fill="#5e2a86"/><rect x="730" y="388" width="1" height="189.4" fill="#5e2a86"/><rect x="731" y="388" width="1" height="210.9" fill="#5e2a86"/><rect x="732" y="388" width="1" height="208.0" fill="#5e2a86"/><rect x="733" y="388" width="1" height="173.0" fill="#5e2a86"/><rect x="734" y="388" width="1" height="161.2" fill="#5e2a86"/><rect x="735" y="388" width="1" height="174.8" fill="#5e2a86"/><rect x="736" y="388" width="1" height="197.2" fill="#5e2a86"/><rect x="737" y="388" width="1" height="166.0" fill="#5e2a86"/><rect x="738" y="388" width="1" height="197.2" fill="#5e2a86"/><rect x="739" y="388" width="1" height="172.0" fill="#5e2a86"/><rect x="740" y="388" width="1" height="209.9" fill="#5e2a86"/><rect x="741" y="388" width="1" height="48.0" fill="#5e2a86"/><rect x="742" y="388" width="1" height="197.2" fill="#5e2a86"/><rect x="744" y="388" width="1" height="199.2" fill="#5e2a86"/><rect x="746" y="388" width="1" height="93.8" fill="#5e2a86"/><rect x="748" y="388" width="1" height="167.0" fill="#5e2a86"/><rect x="750" y="388" width="1" height="160.2" fill="#5e2a86"/><rect x="752" y="388" width="1" height="175.8" fill="#5e2a86"/><rect x="753" y="388" width="1" height="53.0" fill="#5e2a86"/><rect x="754" y="388" width="1" height="175.8" fill="#5e2a86"/><rect x="755" y="388" width="1" height="108.0" fill="#5e2a86"/><rect x="756" y="388" width="2" height="12.0" fill="#5e2a86"/><rect x="758" y="388" width="1" height="82.5" fill="#5e2a86"/><rect x="759" y="388" width="1" height="103.5" fill="#5e2a86"/><rect x="763" y="388" width="1" height="18.0" fill="#5e2a86"/><rect x="765" y="388" width="1" height="120.5" fill="#5e2a86"/><rect x="767" y="388" width="1" height="85.5" fill="#5e2a86"/><rect x="769" y="388" width="1" height="93.8" fill="#5e2a86"/><rect x="771" y="388" width="1" height="177.8" fill="#5e2a86"/><rect x="773" y="388" width="1" height="179.7" fill="#5e2a86"/><rect x="775" y="388" width="1" height="174.8" fill="#5e2a86"/><rect x="777" y="388" width="1" height="183.6" fill="#5e2a86"/><rect x="778" y="388" width="1" height="45.0" fill="#5e2a86"/><rect x="779" y="388" width="1" height="196.3" fill="#5e2a86"/><rect x="780" y="388" width="1" height="117.0" fill="#5e2a86"/><rect x="781" y="388" width="1" height="166.0" fill="#5e2a86"/><rect x="782" y="388" width="1" height="152.0" fill="#5e2a86"/><rect x="783" y="388" width="1" height="167.0" fill="#5e2a86"/><rect x="784" y="388" width="1" height="71.0" fill="#5e2a86"/><rect x="785" y="388" width="1" height="78.7" fill="#5e2a86"/><rect x="786" y="388" width="1" height="142.0" fill="#5e2a86"/><rect x="787" y="388" width="1" height="152.0" fill="#5e2a86"/><rect x="788" y="388" width="1" height="161.2" fill="#5e2a86"/><rect x="789" y="388" width="1" height="132.0" fill="#5e2a86"/><rect x="790" y="388" width="1" height="113.7" fill="#5e2a86"/><rect x="791" y="388" width="1" height="12.0" fill="#5e2a86"/><rect x="792" y="388" width="1" height="184.5" fill="#5e2a86"/><rect x="794" y="388" width="1" height="205.3" fill="#5e2a86"/><rect x="796" y="388" width="1" height="196.8" fill="#5e2a86"/><rect x="798" y="388" width="1" height="166.6" fill="#5e2a86"/><rect x="800" y="388" width="1" height="165.6" fill="#5e2a86"/><rect x="802" y="388" width="1" height="144.6" fill="#5e2a86"/><rect x="804" y="388" width="1" height="176.7" fill="#5e2a86"/><rect x="808" y="388" width="1" height="83.5" fill="#5e2a86"/><rect x="809" y="388" width="1" height="79.6" fill="#5e2a86"/><rect x="810" y="388" width="1" height="145.6" fill="#5e2a86"/><rect x="811" y="388" width="1" height="157.7" fill="#5e2a86"/><rect x="815" y="388" width="1" height="19.4" fill="#5e2a86"/><rect x="817" y="388" width="1" height="100.6" fill="#5e2a86"/><rect x="833" y="388" width="1" height="27.6" fill="#5e2a86"/><rect x="850" y="388" width="1" height="21.3" fill="#5e2a86"/><rect x="852" y="388" width="1" height="79.8" fill="#5e2a86"/><rect x="854" y="388" width="1" height="88.5" fill="#5e2a86"/><rect x="856" y="388" width="1" height="127.5" fill="#5e2a86"/><rect x="858" y="388" width="1" height="117.8" fill="#5e2a86"/><rect x="860" y="388" width="1" height="34.6" fill="#5e2a86"/><rect x="862" y="388" width="1" height="47.6" fill="#5e2a86"/><rect x="863" y="388" width="1" height="44.7" fill="#5e2a86"/><rect x="873" y="388" width="1" height="45.7" fill="#5e2a86"/><rect x="875" y="388" width="1" height="53.5" fill="#5e2a86"/><rect x="877" y="388" width="1" height="29.5" fill="#5e2a86"/><rect x="265" y="388" width="756" height="1" fill="#501c80"/></g></svg><div class="t" style="left:213px;top:686px;width:40px;text-align:right;font-size:11px;color:#3b3b3b;">0</div><div class="t" style="left:213px;top:639px;width:40px;text-align:right;font-size:11px;color:#3b3b3b;">0.1</div><div class="t" style="left:213px;top:591px;width:40px;text-align:right;font-size:11px;color:#3b3b3b;">0.2</div><div class="t" style="left:213px;top:544px;width:40px;text-align:right;font-size:11px;color:#3b3b3b;">0.3</div><div class="t" style="left:213px;top:496px;width:40px;text-align:right;font-size:11px;color:#3b3b3b;">0.4</div><div class="t" style="left:213px;top:449px;width:40px;text-align:right;font-size:11px;color:#3b3b3b;">0.5</div><div class="t" style="left:213px;top:401px;width:40px;text-align:right;font-size:11px;color:#3b3b3b;">0.6</div><div class="t" style="left:213px;top:354px;width:40px;text-align:right;font-size:11px;color:#3b3b3b;">0.7</div><div class="t" style="left:213px;top:306px;width:40px;text-align:right;font-size:11px;color:#3b3b3b;">0.8</div><div class="t" style="left:213px;top:259px;width:40px;text-align:right;font-size:11px;color:#3b3b3b;">0.9</div><div class="t" style="left:213px;top:211px;width:40px;text-align:right;font-size:11px;color:#3b3b3b;">1</div><div class="t" style="left:1032.5px;top:671px;font-size:11px;color:#3b3b3b;letter-spacing:-0.3px;">-40000</div><div class="t" style="left:1032.5px;top:635px;font-size:11px;color:#3b3b3b;letter-spacing:-0.3px;">-35000</div><div class="t" style="left:1032.5px;top:599px;font-size:11px;color:#3b3b3b;letter-spacing:-0.3px;">-30000</div><div class="t" style="left:1032.5px;top:563px;font-size:11px;color:#3b3b3b;letter-spacing:-0.3px;">-25000</div><div class="t" style="left:1032.5px;top:527px;font-size:11px;color:#3b3b3b;letter-spacing:-0.3px;">-20000</div><div class="t" style="left:1032.5px;top:491px;font-size:11px;color:#3b3b3b;letter-spacing:-0.3px;">-15000</div><div class="t" style="left:1032.5px;top:455px;font-size:11px;color:#3b3b3b;letter-spacing:-0.3px;">-10000</div><div class="t" style="left:1032.5px;top:419px;font-size:11px;color:#3b3b3b;letter-spacing:-0.3px;">-5000</div><div class="t" style="left:1032.5px;top:383px;font-size:11px;color:#3b3b3b;letter-spacing:-0.3px;">0</div><div class="t" style="left:1032.5px;top:348px;font-size:11px;color:#3b3b3b;letter-spacing:-0.3px;">5000</div><div class="t" style="left:1032.5px;top:312px;font-size:11px;color:#3b3b3b;letter-spacing:-0.3px;">10000</div><div class="t" style="left:1032.5px;top:276px;font-size:11px;color:#3b3b3b;letter-spacing:-0.3px;">15000</div><div class="t" style="left:1032.5px;top:240px;font-size:11px;color:#3b3b3b;letter-spacing:-0.3px;">20000</div><div class="t" style="left:234.0px;top:702px;width:60px;text-align:center;font-size:11px;color:#3b3b3b;">01/01</div><div class="t" style="left:298.0px;top:702px;width:60px;text-align:center;font-size:11px;color:#3b3b3b;">01/02</div><div class="t" style="left:356.0px;top:702px;width:60px;text-align:center;font-size:11px;color:#3b3b3b;">01/03</div><div class="t" style="left:421.0px;top:702px;width:60px;text-align:center;font-size:11px;color:#3b3b3b;">01/04</div><div class="t" style="left:483.0px;top:702px;width:60px;text-align:center;font-size:11px;color:#3b3b3b;">01/05</div><div class="t" style="left:548.0px;top:702px;width:60px;text-align:center;font-size:11px;color:#3b3b3b;">01/06</div><div class="t" style="left:610.0px;top:702px;width:60px;text-align:center;font-size:11px;color:#3b3b3b;">01/07</div><div class="t" style="left:675.0px;top:702px;width:60px;text-align:center;font-size:11px;color:#3b3b3b;">01/08</div><div class="t" style="left:739.0px;top:702px;width:60px;text-align:center;font-size:11px;color:#3b3b3b;">01/09</div><div class="t" style="left:802.0px;top:702px;width:60px;text-align:center;font-size:11px;color:#3b3b3b;">01/10</div><div class="t" style="left:866.0px;top:702px;width:60px;text-align:center;font-size:11px;color:#3b3b3b;">01/11</div><div class="t" style="left:929.0px;top:702px;width:60px;text-align:center;font-size:11px;color:#3b3b3b;">01/12</div><div class="t" style="left:226px;top:454px;font-size:11px;color:#3b3b3b;transform:translate(-50%,-50%) rotate(-90deg);">Temperatura [°C]</div><div class="t" style="left:1078px;top:453.5px;font-size:11px;color:#3b3b3b;letter-spacing:0.33px;transform:translate(-50%,-50%) rotate(90deg);">Carico termico [W]</div><div class="a" style="left:1091px;top:214px;width:129px;height:146px;background:#fff;box-sizing:border-box;border:1px solid #dcdcdc;"></div><div class="a" style="left:1105px;top:226px;width:15px;height:15px;background:#fff;box-sizing:border-box;border:1px solid #404040;"></div><div class="a" style="left:1124px;top:232px;width:20px;height:1px;background:#404040;"></div><div class="t" style="left:1148px;top:228px;font-size:11px;color:#3b3b3b;">θe</div><div class="a" style="left:1105px;top:244px;width:15px;height:15px;background:#fff;box-sizing:border-box;border:1px solid #f08a3c;"></div><div class="a" style="left:1124px;top:250px;width:20px;height:1px;background:#f08a3c;"></div><div class="t" style="left:1148px;top:246px;font-size:11px;color:#3b3b3b;">θ media rad</div><div class="a" style="left:1105px;top:262px;width:15px;height:15px;background:#fff;box-sizing:border-box;border:1px solid #8cc8e0;"></div><div class="a" style="left:1124px;top:268px;width:20px;height:1px;background:#8cc8e0;"></div><div class="t" style="left:1148px;top:264px;font-size:11px;color:#3b3b3b;">θint;a</div><div class="a" style="left:1105px;top:280px;width:15px;height:15px;background:#fff;box-sizing:border-box;border:1px solid #e03a3a;"></div><svg class="a" style="left:1124px;top:280px;" width="20" height="14" viewBox="0 0 20 14"><path d="M0 0.5H10V5.5H19V13" fill="none" stroke="#e03a3a" stroke-width="1" stroke-dasharray="2 1.5"/></svg><div class="t" style="left:1148px;top:282px;font-size:11px;color:#3b3b3b;">θint;set;H</div><div class="a" style="left:1105px;top:298px;width:15px;height:15px;background:#fff;box-sizing:border-box;border:1px solid #28a8e0;"></div><svg class="a" style="left:1124px;top:298px;" width="20" height="14" viewBox="0 0 20 14"><path d="M0 0.5H10V5.5H19V13" fill="none" stroke="#28a8e0" stroke-width="1" stroke-dasharray="2 1.5"/></svg><div class="t" style="left:1148px;top:300px;font-size:11px;color:#3b3b3b;">θint;set;C</div><div class="a" style="left:1105px;top:316px;width:15px;height:15px;background:#fff;box-sizing:border-box;border:1px solid #7cc444;"></div><div class="a" style="left:1124px;top:322px;width:20px;height:1px;background:#7cc444;"></div><div class="t" style="left:1148px;top:318px;font-size:11px;color:#3b3b3b;">θint;op;ac</div><div class="a" style="left:1105px;top:334px;width:15px;height:15px;background:#fff;box-sizing:border-box;border:1px solid #7030a0;"></div><div class="a" style="left:1125px;top:334px;width:18px;height:14px;background:#7030a0;box-sizing:border-box;border:1px solid #5a2089;"></div><svg class="a" style="left:1105px;top:334px;" width="15" height="15" viewBox="0 0 15 15"><path d="M3.8 7.8L6.4 10.4L11.2 5" fill="none" stroke="#6a2c9a" stroke-width="1.8"/></svg><div class="t" style="left:1148px;top:336px;font-size:11px;color:#3b3b3b;">ΦHC;ld;ac</div><div class="a" style="left:373px;top:124px;width:86px;height:27px;box-sizing:border-box;border:3px solid #e8141c;"></div><div class="a" style="left:229px;top:150px;width:38px;height:22px;box-sizing:border-box;border:3px solid #e8141c;"></div><div class="a" style="left:190px;top:250px;width:25px;height:53px;box-sizing:border-box;border:3px solid #e8141c;"></div>
</body></html>
